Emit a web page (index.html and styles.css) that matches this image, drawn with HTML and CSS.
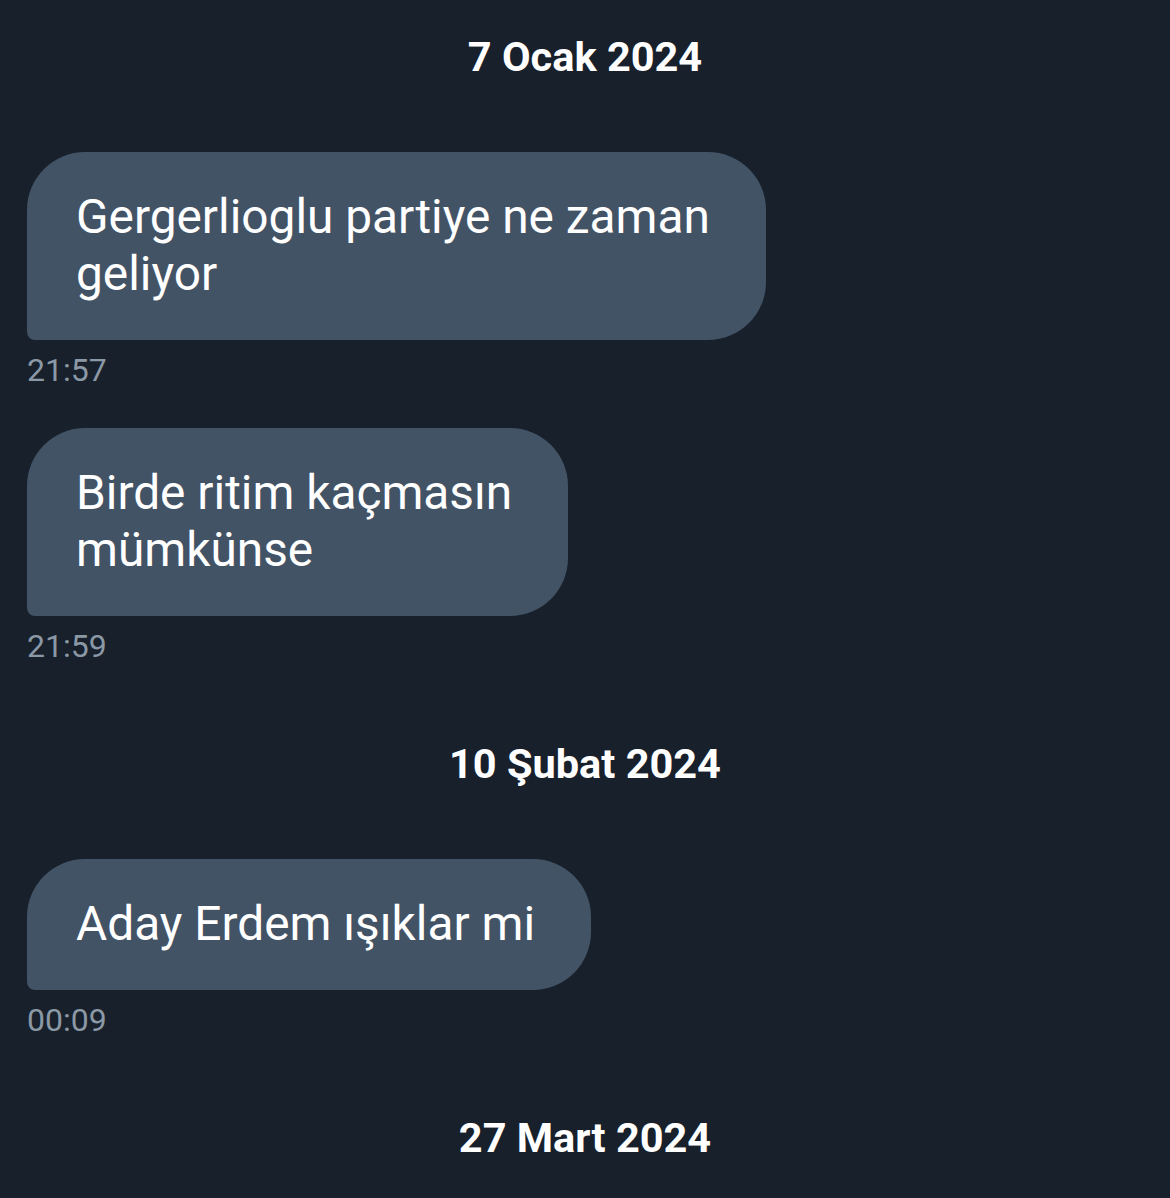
FILE: index.html
```html
<!DOCTYPE html>
<html lang="tr">
<head>
    <meta charset="UTF-8">
    <meta name="viewport" content="width=device-width, initial-scale=1.0">
    <title>Mesajlar</title>
    <link rel="stylesheet" href="styles.css">
</head>
<body>
    <div class="chat">
        <!-- 7 Ocak -->
        <div class="date">7 Ocak 2024</div>

        <div class="message">
            <div class="bubble">Gergerlioglu partiye ne zaman<br>geliyor</div>
            <div class="time">21:57</div>
        </div>

        <div class="message">
            <div class="bubble">Birde ritim kaçmasın<br>mümkünse</div>
            <div class="time">21:59</div>
        </div>

        <!-- 10 Şubat -->
        <div class="date">10 Şubat 2024</div>

        <div class="message">
            <div class="bubble">Aday Erdem ışıklar mi</div>
            <div class="time">00:09</div>
        </div>

        <!-- 27 Mart -->
        <div class="date">27 Mart 2024</div>
    </div>
</body>
</html>
```
FILE: styles.css
```css
body {
    margin: 0;
    padding: 0;
    background-color: #17202b;
    color: white;
    font-family: Roboto, "Noto Sans", Arial, sans-serif;
}

.chat {
    display: flex;
    flex-direction: column;
    padding: 35px 0 0 27px;
}

/* Date separators */
.date {
    font-size: 41.5px;
    font-weight: bold;
    line-height: 44px;
    text-align: center;
    margin-right: 27px;
    margin-bottom: 73px;
}

.message + .date {
    margin-top: 38px;
}

.message {
    display: flex;
    flex-direction: column;
    align-items: flex-start;
    margin-bottom: 40px;
}

.bubble {
    background-color: #435366;
    padding: 37px 56px 37px 49px;
    font-size: 47.8px;
    line-height: 57px;
    border-radius: 58px 58px 58px 8px;
}

.time {
    margin-top: 12px;
    font-size: 32px;
    line-height: 36px;
    color: #8b98a5;
}
```
